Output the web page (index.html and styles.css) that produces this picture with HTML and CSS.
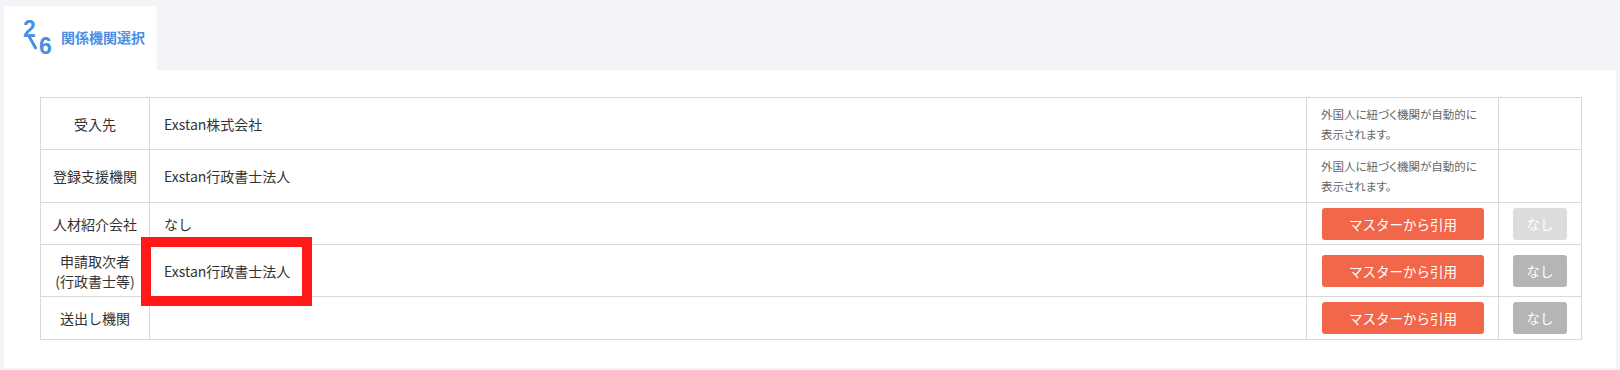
FILE: index.html
```html
<!DOCTYPE html>
<html lang="ja">
<head>
  <meta charset="UTF-8" />
  <meta name="viewport" content="width=device-width, initial-scale=1.0"/>
  <title>関係機関選択</title>
  <link rel="stylesheet" href="styles.css">
</head>
<body>

  <div class="page">
    <div class="tab">
      <div class="step">
        <span class="step-now">2</span>
        <span class="step-slash"></span>
        <span class="step-all">6</span>
      </div>
      <h2 class="tab-title">関係機関選択</h2>
    </div>

    <div class="panel">
      <table class="org-table">
        <colgroup>
          <col class="col-label">
          <col>
          <col class="col-note">
          <col class="col-action">
        </colgroup>
        <tr class="row-tall">
          <th>受入先</th>
          <td class="value">Exstan株式会社</td>
          <td class="note">外国人に紐づく機関が自動的に<br>表示されます。</td>
          <td></td>
        </tr>
        <tr class="row-tall2">
          <th>登録支援機関</th>
          <td class="value">Exstan行政書士法人</td>
          <td class="note">外国人に紐づく機関が自動的に<br>表示されます。</td>
          <td></td>
        </tr>
        <tr class="row-short">
          <th>人材紹介会社</th>
          <td class="value">なし</td>
          <td class="btn-cell"><button class="btn-master">マスターから引用</button></td>
          <td class="btn-cell"><button class="btn-none" disabled>なし</button></td>
        </tr>
        <tr class="row-tall">
          <th>申請取次者<br>(行政書士等)</th>
          <td class="value"><span class="marked">Exstan行政書士法人</span></td>
          <td class="btn-cell"><button class="btn-master">マスターから引用</button></td>
          <td class="btn-cell"><button class="btn-none">なし</button></td>
        </tr>
        <tr class="row-short2">
          <th>送出し機関</th>
          <td class="value"></td>
          <td class="btn-cell"><button class="btn-master">マスターから引用</button></td>
          <td class="btn-cell"><button class="btn-none">なし</button></td>
        </tr>
      </table>
    </div>
  </div>

</body>
</html>
```

FILE: styles.css
```css
body {
  font-family: "Noto Sans CJK JP", "Noto Sans", sans-serif;
  margin: 0;
  padding: 0;
  background: #f3f4f8;
  color: #333;
}
.page {
  padding: 6px 4px 3px 4px;
}
.tab {
  width: 153px;
  height: 64px;
  background: #fff;
  display: flex;
  align-items: center;
  box-sizing: border-box;
  padding-left: 18px;
  gap: 8px;
  color: #4a8fe3;
}
.step {
  position: relative;
  width: 31px;
  height: 34px;
  font-family: "Liberation Sans", sans-serif;
  font-weight: 700;
  font-size: 23px;
  line-height: 23px;
}
.step-now,
.step-all {
  position: absolute;
}
.step-now {
  left: 1px;
  top: -3px;
}
.step-all {
  left: 17px;
  top: 14px;
}
.step-slash {
  position: absolute;
  left: 9px;
  top: 14px;
  width: 3px;
  height: 15px;
  border-radius: 1px;
  background: #4a8fe3;
  transform: rotate(-30deg);
}
.tab-title {
  margin: 0 0 2px 0;
  font-size: 14px;
  font-weight: 700;
  color: #4a8fe3;
}
.panel {
  background: #fff;
  padding: 27px 34px 28px 36px;
}
.org-table {
  width: 100%;
  border-collapse: collapse;
  font-size: 14px;
}
.col-label {
  width: 109px;
}
.col-note {
  width: 190px;
}
.col-action {
  width: 83px;
}
.org-table th,
.org-table td {
  border: 1px solid #d9d9d9;
  padding: 0 14px;
  line-height: 20px;
}
.org-table th {
  font-weight: 400;
  text-align: center;
  padding: 0 4px;
}
.row-tall { height: 52px; }
.row-tall2 { height: 53px; }
.row-short { height: 42px; }
.row-short2 { height: 43px; }
.value {
  text-align: left;
}
.note {
  font-size: 11.5px;
  color: #666;
  font-feature-settings: "palt";
}
.btn-cell {
  vertical-align: middle;
}
.btn-master,
.btn-none {
  font-family: inherit;
  font-size: 13.5px;
  height: 32px;
  border: none;
  border-radius: 3px;
  color: #fff;
  cursor: pointer;
  display: block;
}
.btn-master {
  width: 162px;
  margin-left: 1px;
  background: #f2674a;
}
.btn-none {
  width: 54px;
  background: #b5b5b5;
}
.btn-none:disabled {
  background: #dcdcdc;
  cursor: default;
}
.marked {
  position: relative;
}
.marked::after {
  content: "";
  position: absolute;
  left: -23px;
  top: -24px;
  width: 171px;
  height: 69px;
  box-sizing: border-box;
  border: 10px solid #ff1a1a;
}
```
